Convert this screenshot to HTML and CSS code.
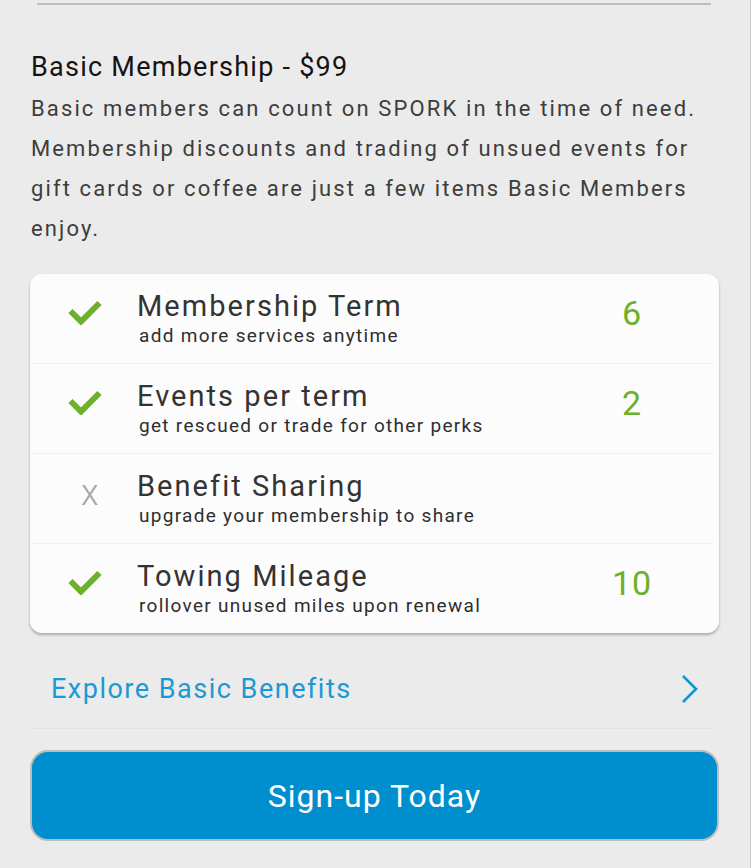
FILE: index.html
```html
<!DOCTYPE html>
<html lang="en">
<head>
<meta charset="utf-8">
<title>Basic Membership</title>
<link rel="stylesheet" href="styles.css">
</head>
<body>
<div class="page">
  <div class="rule"></div>
  <section class="intro">
    <h2 class="intro-title">Basic Membership - $99</h2>
    <p class="intro-text">Basic members can count on SPORK in the time of need. Membership discounts and trading of unsued events for gift cards or coffee are just a few items Basic Members enjoy.</p>
  </section>

  <div class="card">
    <div class="row">
      <div class="icon"><svg class="check" viewBox="0 0 34 26" width="34" height="26"><polyline points="2.5,12 13,22.5 31.5,4" fill="none" stroke="#6cb02b" stroke-width="6"/></svg></div>
      <div class="text">
        <div class="title">Membership Term</div>
        <div class="sub">add more services anytime</div>
      </div>
      <div class="num">6</div>
    </div>
    <div class="row">
      <div class="icon"><svg class="check" viewBox="0 0 34 26" width="34" height="26"><polyline points="2.5,12 13,22.5 31.5,4" fill="none" stroke="#6cb02b" stroke-width="6"/></svg></div>
      <div class="text">
        <div class="title">Events per term</div>
        <div class="sub">get rescued or trade for other perks</div>
      </div>
      <div class="num">2</div>
    </div>
    <div class="row">
      <div class="icon"><span class="xmark">x</span></div>
      <div class="text">
        <div class="title">Benefit Sharing</div>
        <div class="sub">upgrade your membership to share</div>
      </div>
      <div class="num"></div>
    </div>
    <div class="row">
      <div class="icon"><svg class="check" viewBox="0 0 34 26" width="34" height="26"><polyline points="2.5,12 13,22.5 31.5,4" fill="none" stroke="#6cb02b" stroke-width="6"/></svg></div>
      <div class="text">
        <div class="title">Towing Mileage</div>
        <div class="sub">rollover unused miles upon renewal</div>
      </div>
      <div class="num">10</div>
    </div>
  </div>

  <a class="explore" href="#">
    <span class="explore-label">Explore Basic Benefits</span>
    <svg class="chevron" viewBox="0 0 18 30" width="18" height="30"><polyline points="2,2 15,15 2,28" fill="none" stroke="#0b96d6" stroke-width="2.6"/></svg>
  </a>

  <button class="cta" type="button">Sign-up Today</button>
</div>
</body>
</html>
```

FILE: styles.css
```css
* { box-sizing: border-box; }

html, body {
  margin: 0;
  padding: 0;
  background: #ebebeb;
}

body {
  font-family: Roboto, "Liberation Sans", sans-serif;
}

.page {
  width: 751px;
  min-height: 868px;
  border-right: 1px solid #cdcdcd;
  padding-top: 3px;
  display: flex;
  flex-direction: column;
}

.rule {
  height: 2px;
  background: #bdbdbd;
  margin: 0 39px 0 37px;
}

.intro {
  padding: 0 30px 0 31px;
  margin-top: 46px;
}

.intro-title {
  margin: 0;
  font-size: 27px;
  line-height: 32px;
  font-weight: 400;
  letter-spacing: 1.25px;
  color: #141414;
}

.intro-text {
  margin: 6px 0 0;
  font-size: 22px;
  line-height: 40px;
  letter-spacing: 2.12px;
  color: #3d3d3d;
}

.card {
  margin: 25px 31px 0 30px;
  background: #fcfcfc;
  border-radius: 12px;
  box-shadow: 0 2px 3px rgba(0, 0, 0, 0.28);
}

.row {
  display: grid;
  grid-template-columns: 107px 1fr 60px;
  padding: 17px 52px 12px 0;
  border-top: 1px solid #f0f0f0;
  margin-right: 5px;
}

.row:first-child {
  border-top: none;
}

.icon {
  padding-left: 38px;
}

.check {
  display: block;
  margin-top: 8px;
}

.xmark {
  display: block;
  margin: 4px 0 0 13px;
  font-size: 36px;
  line-height: 36px;
  font-weight: 300;
  color: #a6a6a6;
}

.title {
  font-size: 29px;
  line-height: 30px;
  letter-spacing: 2.05px;
  color: #333333;
}

.sub {
  font-size: 19px;
  line-height: 30px;
  letter-spacing: 1.3px;
  color: #2e2e2e;
  padding-left: 2px;
}

.num {
  text-align: center;
  padding-top: 2px;
  font-size: 34px;
  line-height: 40px;
  letter-spacing: 1px;
  color: #6cb02b;
}

.explore {
  display: flex;
  align-items: center;
  justify-content: space-between;
  margin: 0 37px 0 30px;
  padding: 40px 14px 23px 21px;
  border-bottom: 1px solid #e2e2e2;
  text-decoration: none;
}

.explore-label {
  font-size: 27px;
  line-height: 32px;
  letter-spacing: 1.5px;
  color: #1a99d6;
}

.chevron {
  display: block;
}

.cta {
  margin: 21px 31px 0 30px;
  height: 91px;
  border: 2px solid #bcbcbc;
  border-radius: 18px;
  background: #008fce;
  color: #ffffff;
  font-family: Roboto, "Liberation Sans", sans-serif;
  font-size: 32px;
  letter-spacing: 1px;
  cursor: pointer;
}
```
